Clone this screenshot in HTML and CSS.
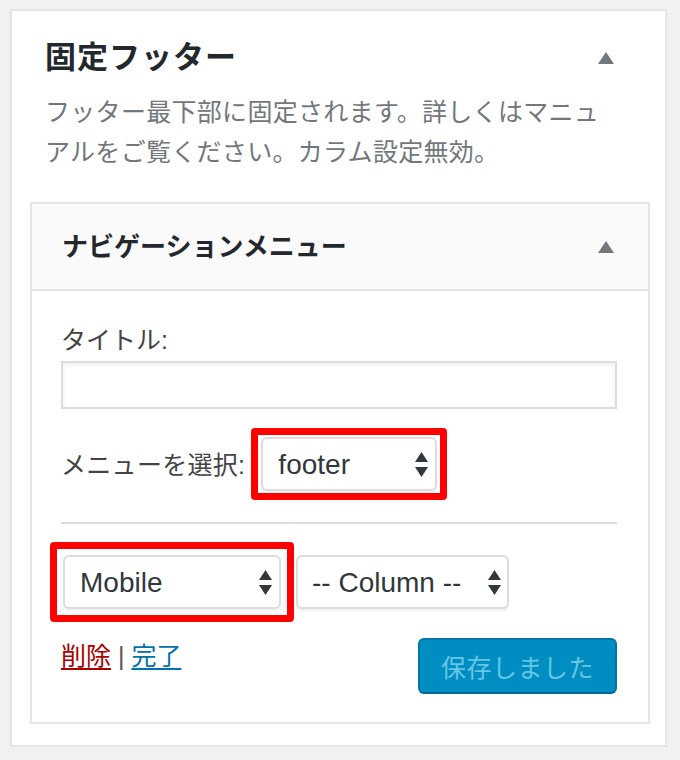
FILE: index.html
```html
<!DOCTYPE html>
<html lang="ja">
<head>
  <meta charset="UTF-8" />
  <title>固定フッター - ウィジェット</title>
  <meta name="viewport" content="width=device-width, initial-scale=1.0" />
  <link rel="stylesheet" href="styles.css">
</head>
<body>

  <div class="sidebar">
    <div class="sidebar-head">
      <h2>固定フッター</h2>
      <svg class="toggle" width="16" height="12" viewBox="0 0 16 12"><polygon points="8,0 16,12 0,12" /></svg>
    </div>
    <p class="sidebar-desc">フッター最下部に固定されます。詳しくはマニュアルをご覧ください。カラム設定無効。</p>

    <div class="widget">
      <div class="widget-head">
        <h3>ナビゲーションメニュー</h3>
        <svg class="toggle" width="16" height="12" viewBox="0 0 16 12"><polygon points="8,0 16,12 0,12" /></svg>
      </div>

      <div class="widget-body">
        <label class="field-label" for="navTitle">タイトル:</label>
        <input type="text" id="navTitle" class="text-input" />

        <div class="menu-row">
          <label for="navMenu">メニューを選択:</label>
          <div class="mark">
            <div class="select-wrap select-menu">
              <select id="navMenu"><option>footer</option></select>
              <svg class="select-arrows" width="13" height="25" viewBox="0 0 13 25"><polygon points="6.5,0 13,10 0,10" /><polygon points="0,15 13,15 6.5,25" /></svg>
            </div>
          </div>
        </div>

        <hr class="divider" />

        <div class="device-row">
          <div class="mark mark-wide">
            <div class="select-wrap select-device">
              <select><option>Mobile</option></select>
              <svg class="select-arrows" width="13" height="25" viewBox="0 0 13 25"><polygon points="6.5,0 13,10 0,10" /><polygon points="0,15 13,15 6.5,25" /></svg>
            </div>
          </div>
          <div class="select-wrap select-column">
            <select><option>-- Column --</option></select>
            <svg class="select-arrows" width="13" height="25" viewBox="0 0 13 25"><polygon points="6.5,0 13,10 0,10" /><polygon points="0,15 13,15 6.5,25" /></svg>
          </div>
        </div>

        <div class="actions">
          <div class="links">
            <a href="#" class="link-delete">削除</a> | <a href="#" class="link-done">完了</a>
          </div>
          <button class="save-btn" disabled>保存しました</button>
        </div>
      </div>
    </div>
  </div>

</body>
</html>
```

FILE: styles.css
```css
* {
  box-sizing: border-box;
}

body {
  font-family: "Liberation Sans", "Noto Sans CJK JP", sans-serif;
  background-color: #f1f1f1;
  margin: 0;
  padding: 9px 0 0 10px;
  color: #444;
}

.sidebar {
  width: 657px;
  background-color: #fff;
  border: 2px solid #e5e5e5;
  box-shadow: 0 2px 2px rgba(0,0,0,0.04);
  padding: 27px 0 21px 0;
}

.sidebar-head {
  display: flex;
  justify-content: space-between;
  align-items: center;
  padding: 0 51px 0 33px;
}

.sidebar-head h2 {
  margin: 0;
  font-size: 31px;
  line-height: 40px;
  font-weight: bold;
  letter-spacing: 1px;
  color: #23282d;
}

.toggle {
  display: block;
  fill: #72777c;
}

.sidebar-desc {
  margin: 14px 0 0 0;
  padding: 0 50px 0 33px;
  font-size: 25px;
  line-height: 40px;
  letter-spacing: 0.3px;
  color: #72777c;
}

.widget {
  margin: 30px 15px 0 18px;
  border: 2px solid #e5e5e5;
}

.widget-head {
  display: flex;
  justify-content: space-between;
  align-items: center;
  height: 87px;
  padding: 0 34px 0 30px;
  background-color: #fafafa;
  border-bottom: 2px solid #e5e5e5;
}

.widget-head h3 {
  margin: 0;
  font-size: 26px;
  line-height: 36px;
  font-weight: bold;
  color: #23282d;
}

.widget-body {
  padding: 31px 31px 28px 29px;
}

.field-label {
  display: block;
  font-size: 25px;
  line-height: 36px;
  color: #444;
}

.text-input {
  display: block;
  width: 100%;
  height: 48px;
  margin: 3px 0 0 0;
  border: 2px solid #ddd;
  box-shadow: inset 0 2px 4px rgba(0,0,0,0.07);
  font-size: 25px;
}

.menu-row {
  display: flex;
  align-items: center;
  margin-top: 19px;
  font-size: 25px;
  line-height: 36px;
}

.menu-row label {
  margin-right: 6px;
  letter-spacing: 0.3px;
  position: relative;
  top: 1px;
}

.mark {
  border: 7px solid #f00;
  border-radius: 4px;
  padding: 2px 3px;
}

.mark-wide {
  padding: 6px;
  margin-left: -11px;
}

.select-wrap {
  position: relative;
}

.select-wrap select {
  display: block;
  width: 100%;
  height: 54px;
  padding: 0 0 0 15px;
  border: 2px solid #ddd;
  border-radius: 6px;
  background-color: #fff;
  box-shadow: 0 2px 2px rgba(0,0,0,0.06);
  font-family: "Liberation Sans", sans-serif;
  font-size: 28px;
  color: #32373c;
  appearance: none;
  -webkit-appearance: none;
}

.select-arrows {
  position: absolute;
  right: 9px;
  top: 15px;
  fill: #32373c;
  pointer-events: none;
}

.select-menu { width: 176px; }
.select-device { width: 218px; }
.select-column {
  width: 213px;
  margin-left: 2px;
}
.select-column select { padding-left: 14px; }
.select-column .select-arrows { right: 8px; }

.divider {
  margin: 22px 0 0 0;
  border: 0;
  height: 2px;
  background-color: #ddd;
}

.device-row {
  display: flex;
  align-items: center;
  margin-top: 18px;
}

.actions {
  display: flex;
  justify-content: space-between;
  align-items: flex-start;
  margin-top: 16px;
}

.links {
  font-size: 25px;
  line-height: 36px;
  color: #555;
}

.links a {
  text-underline-offset: 3px;
}

.link-delete { color: #a00; }
.link-done { color: #0073aa; }

.save-btn {
  width: 199px;
  height: 56px;
  border: 2px solid #0073aa;
  border-bottom-color: #006799;
  border-radius: 6px;
  background-color: #008ec2;
  color: #66c6e4;
  font-family: "Liberation Sans", "Noto Sans CJK JP", sans-serif;
  font-size: 25px;
  letter-spacing: 0.5px;
  padding: 0;
}
```
